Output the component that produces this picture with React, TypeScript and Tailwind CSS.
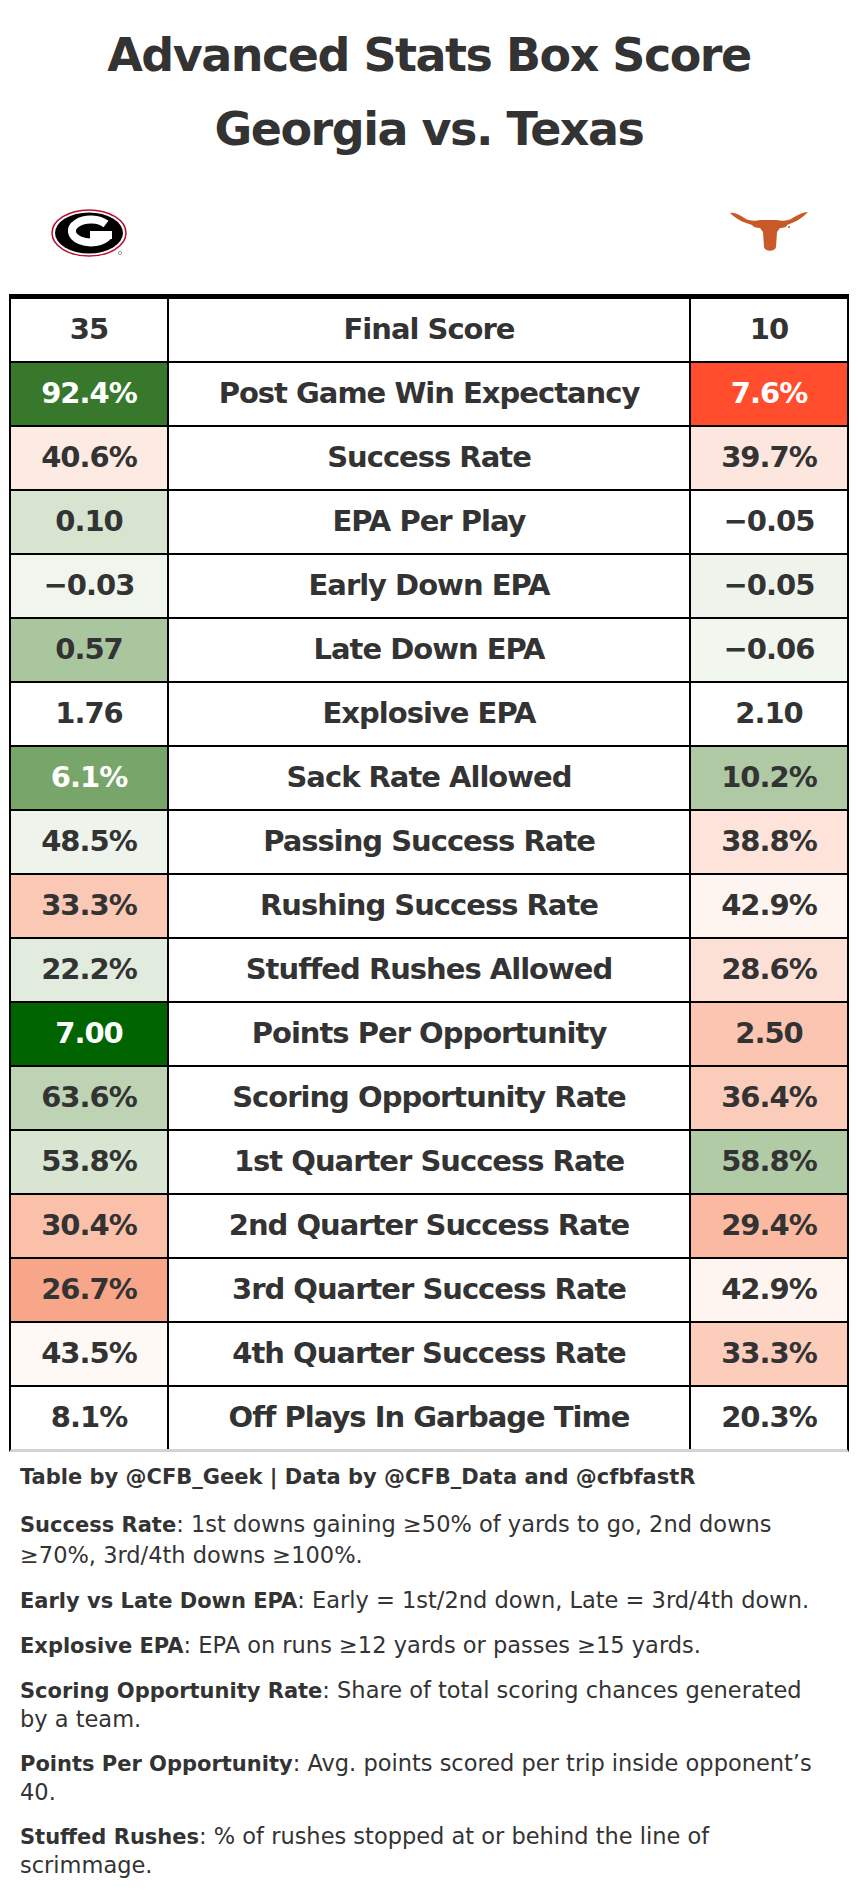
const rows = [
  { l: "35", label: "Final Score", r: "10", lb: "#ffffff", rb: "#ffffff" },
  { l: "92.4%", label: "Post Game Win Expectancy", r: "7.6%", lb: "#38782d", rb: "#ff4d2e", lw: true, rw: true },
  { l: "40.6%", label: "Success Rate", r: "39.7%", lb: "#fdeae2", rb: "#fde6dd" },
  { l: "0.10", label: "EPA Per Play", r: "−0.05", lb: "#d6e4d0", rb: "#ffffff" },
  { l: "−0.03", label: "Early Down EPA", r: "−0.05", lb: "#f0f6ee", rb: "#eef4eb" },
  { l: "0.57", label: "Late Down EPA", r: "−0.06", lb: "#a9c69f", rb: "#f1f6ef" },
  { l: "1.76", label: "Explosive EPA", r: "2.10", lb: "#ffffff", rb: "#ffffff" },
  { l: "6.1%", label: "Sack Rate Allowed", r: "10.2%", lb: "#78a66a", rb: "#aec9a4", lw: true },
  { l: "48.5%", label: "Passing Success Rate", r: "38.8%", lb: "#eef4ec", rb: "#fde3d9" },
  { l: "33.3%", label: "Rushing Success Rate", r: "42.9%", lb: "#fbc8b5", rb: "#fff5f0" },
  { l: "22.2%", label: "Stuffed Rushes Allowed", r: "28.6%", lb: "#e2ecde", rb: "#fde0d5" },
  { l: "7.00", label: "Points Per Opportunity", r: "2.50", lb: "#006400", rb: "#fcc5b1", lw: true },
  { l: "63.6%", label: "Scoring Opportunity Rate", r: "36.4%", lb: "#bdd3b4", rb: "#fcccba" },
  { l: "53.8%", label: "1st Quarter Success Rate", r: "58.8%", lb: "#d7e5d1", rb: "#b1cba7" },
  { l: "30.4%", label: "2nd Quarter Success Rate", r: "29.4%", lb: "#fbc0aa", rb: "#fbb9a2" },
  { l: "26.7%", label: "3rd Quarter Success Rate", r: "42.9%", lb: "#f8a68a", rb: "#fff5f0" },
  { l: "43.5%", label: "4th Quarter Success Rate", r: "33.3%", lb: "#fff9f6", rb: "#fccdbb" },
  { l: "8.1%", label: "Off Plays In Garbage Time", r: "20.3%", lb: "#ffffff", rb: "#ffffff" },
];

const GeorgiaLogo = () => (
  <svg width="76" height="48" viewBox="0 0 76 48">
    <ellipse cx="38" cy="24" rx="37" ry="23" fill="#fff" stroke="#ba0c2f" strokeWidth="1.5" />
    <ellipse cx="38" cy="24" rx="34" ry="20.5" fill="#000" />
    <path d="M55 15 A19 11.5 0 1 0 57 27" fill="none" stroke="#fff" strokeWidth="8" />
    <rect x="39" y="22" width="22" height="8" fill="#fff" />
    <circle cx="69" cy="44" r="1.6" fill="none" stroke="#555" strokeWidth="0.6" />
  </svg>
);

const TexasLogo = () => (
  <svg width="80" height="42" viewBox="0 0 80 42">
    <path
      d="M1 2 C6 1 12 5 17 8 C21 10 27 10 31 9 L48 9 C52 10 58 10 62 8 C67 5 73 1 79 1 C75 5 69 10 63 12 L58 14 C58 16 55 17 51 17 L48 21 L47 36 C46 41 36 41 35 36 L34 21 L31 17 C27 17 24 16 23 14 L17 12 C11 10 5 6 1 2 Z"
      fill="#c85a2a"
    />
    <circle cx="60" cy="16" r="1" fill="#c85a2a" />
  </svg>
);

const notes = [
  { b: "Early vs Late Down EPA", t: ": Early = 1st/2nd down, Late = 3rd/4th down." },
  { b: "Explosive EPA", t: ": EPA on runs ≥12 yards or passes ≥15 yards." },
  { b: "Scoring Opportunity Rate", t: ": Share of total scoring chances generated", t2: "by a team." },
  { b: "Points Per Opportunity", t: ": Avg. points scored per trip inside opponent’s", t2: "40." },
  { b: "Stuffed Rushes", t: ": % of rushes stopped at or behind the line of", t2: "scrimmage." },
];

export default function App() {
  return (
    <div className="w-[858px] h-[1898px] bg-white text-[#333] font-['DejaVu_Sans',sans-serif]">
      <div className="pt-[18px] text-center text-[46px] leading-[74px] font-bold tracking-[-1.5px]">
        <div>Advanced Stats Box Score</div>
        <div>Georgia vs. Texas</div>
      </div>

      <div className="mt-[43px] flex justify-between items-start">
        <div className="ml-[51px]">
          <GeorgiaLogo />
        </div>
        <div className="mr-[49px] mt-[2px]">
          <TexasLogo />
        </div>
      </div>

      <div className="mt-[37px] ml-[9px] w-[840px] border-t-[5px] border-x-2 border-black border-b-[3px] border-b-[#d3d3d3]">
        {rows.map((row, i) => (
          <div
            key={row.label}
            className={
              i === rows.length - 1
                ? "flex h-[62px] text-[29px] font-bold tracking-[-1px]"
                : "flex h-[64px] text-[29px] font-bold tracking-[-1px] border-b-2 border-black"
            }
          >
            <div
              className="w-[158px] border-r-2 border-black flex items-center justify-center"
              style={{ backgroundColor: row.lb, color: row.lw ? "#ffffff" : "#333333" }}
            >
              {row.l}
            </div>
            <div className="w-[522px] border-r-2 border-black flex items-center justify-center">
              {row.label}
            </div>
            <div
              className="flex-1 flex items-center justify-center"
              style={{ backgroundColor: row.rb, color: row.rw ? "#ffffff" : "#333333" }}
            >
              {row.r}
            </div>
          </div>
        ))}
      </div>

      <div className="pt-[11px] px-[20px] text-[22.5px] leading-[28px] whitespace-nowrap">
        <p className="font-bold text-[21px] mb-[18px]">Table by @CFB_Geek | Data by @CFB_Data and @cfbfastR</p>
        <p className="mb-[16px] leading-[30px]">
          <span className="font-bold text-[21px]">Success Rate</span>: 1st downs gaining ≥50% of yards to go, 2nd downs
          <br />
          ≥70%, 3rd/4th downs ≥100%.
        </p>
        {notes.map((n) => (
          <p key={n.b} className="mb-[16px]">
            <span className="font-bold text-[21px]">{n.b}</span>
            {n.t}
            {n.t2 && (
              <>
                <br />
                {n.t2}
              </>
            )}
          </p>
        ))}
      </div>
    </div>
  );
}
